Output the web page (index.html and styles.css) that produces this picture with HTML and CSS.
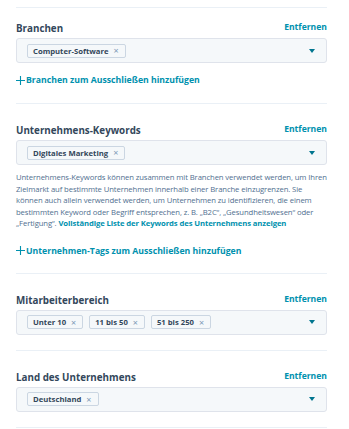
FILE: index.html
```html
<!DOCTYPE html>
<html lang="de">
<head>
    <meta charset="UTF-8">
    <meta name="viewport" content="width=device-width, initial-scale=1.0">
    <title>Filter</title>
    <link rel="stylesheet" href="styles.css">
</head>
<body>
    <div class="filters">
        <div class="filter-section first">
            <div class="filter-head">
                <span class="filter-label">Branchen</span>
                <a class="remove-link">Entfernen</a>
            </div>
            <div class="select-box">
                <div class="tags">
                    <span class="tag">Computer-Software <span class="tag-x">&times;</span></span>
                </div>
                <span class="caret"></span>
            </div>
            <a class="add-link"><svg class="plus" viewBox="0 0 9 9"><path d="M0 4.5h9M4.5 0v9"/></svg>Branchen zum Ausschließen hinzufügen</a>
        </div>

        <div class="filter-section">
            <div class="filter-head">
                <span class="filter-label">Unternehmens-Keywords</span>
                <a class="remove-link">Entfernen</a>
            </div>
            <div class="select-box">
                <div class="tags">
                    <span class="tag">Digitales Marketing <span class="tag-x">&times;</span></span>
                </div>
                <span class="caret"></span>
            </div>
            <p class="help-text">Unternehmens-Keywords können zusammen mit Branchen verwendet werden, um Ihren Zielmarkt auf bestimmte Unternehmen innerhalb einer Branche einzugrenzen. Sie können auch allein verwendet werden, um Unternehmen zu identifizieren, die einem bestimmten Keyword oder Begriff entsprechen, z. B. „B2C“, „Gesundheitswesen“ oder „Fertigung“. <a class="inline-link">Vollständige Liste der Keywords des Unternehmens anzeigen</a></p>
            <a class="add-link add-link-wide"><svg class="plus" viewBox="0 0 9 9"><path d="M0 4.5h9M4.5 0v9"/></svg>Unternehmen-Tags zum Ausschließen hinzufügen</a>
        </div>

        <div class="filter-section">
            <div class="filter-head">
                <span class="filter-label">Mitarbeiterbereich</span>
                <a class="remove-link">Entfernen</a>
            </div>
            <div class="select-box">
                <div class="tags">
                    <span class="tag">Unter 10 <span class="tag-x">&times;</span></span>
                    <span class="tag">11 bis 50 <span class="tag-x">&times;</span></span>
                    <span class="tag">51 bis 250 <span class="tag-x">&times;</span></span>
                </div>
                <span class="caret"></span>
            </div>
        </div>

        <div class="filter-section">
            <div class="filter-head">
                <span class="filter-label">Land des Unternehmens</span>
                <a class="remove-link">Entfernen</a>
            </div>
            <div class="select-box">
                <div class="tags">
                    <span class="tag">Deutschland <span class="tag-x">&times;</span></span>
                </div>
                <span class="caret"></span>
            </div>
        </div>
        <div class="filter-end"></div>
    </div>
</body>
</html>
```

FILE: styles.css
```css
body {
    margin: 0;
    padding: 7px 22px 0 16px;
    background: #fff;
    font-family: "Open Sans", Lato, sans-serif;
    color: #33475b;
}
.filter-section {
    border-top: 1px solid #eaf0f6;
    padding: 20px 0 15px;
}
.filter-section.first {
    padding-top: 14px;
}
.filter-head {
    display: flex;
    justify-content: space-between;
    align-items: flex-end;
    height: 14px;
    margin-bottom: 2px;
}
.filter-label {
    font-size: 9.8px;
    font-weight: 700;
    line-height: 14px;
}
.remove-link {
    font-size: 8.6px;
    font-weight: 700;
    color: #0091ae;
    line-height: 14px;
    margin-bottom: 2px;
}
.select-box {
    display: flex;
    align-items: center;
    justify-content: space-between;
    height: 23px;
    background: #f5f8fa;
    border: 1px solid #dfe3eb;
    border-radius: 3px;
    padding: 0 11px 0 10px;
}
.tags {
    display: flex;
    gap: 6px;
}
.tag {
    display: inline-flex;
    align-items: center;
    height: 12px;
    padding: 0 6px 0 5px;
    background: #f5f8fa;
    border: 1px solid #cbd6e2;
    border-radius: 2px;
    font-size: 7.7px;
    font-weight: 700;
    color: #33475b;
}
.tag-x {
    margin-left: 5px;
    font-weight: 400;
    font-size: 9px;
    color: #7c98b6;
}
.caret {
    width: 0;
    height: 0;
    border-left: 3.5px solid transparent;
    border-right: 3.5px solid transparent;
    border-top: 4px solid #00758f;
}
.add-link {
    display: flex;
    align-items: center;
    margin-top: 11px;
    margin-bottom: 2px;
    font-size: 8.7px;
    font-weight: 700;
    line-height: 12px;
    color: #0091ae;
}
.add-link-wide {
    margin-top: 15px;
    margin-bottom: 1px;
}
.plus {
    width: 9px;
    height: 9px;
    margin-right: 1px;
    stroke: #0091ae;
    stroke-width: 1.1;
    fill: none;
}
.help-text {
    margin: 7px 0 0;
    font-size: 7.7px;
    letter-spacing: -0.1px;
    line-height: 11.6px;
    color: #516f90;
}
.inline-link {
    font-weight: 700;
    color: #0091ae;
}
.filter-end {
    border-top: 1px solid #eaf0f6;
}
```
